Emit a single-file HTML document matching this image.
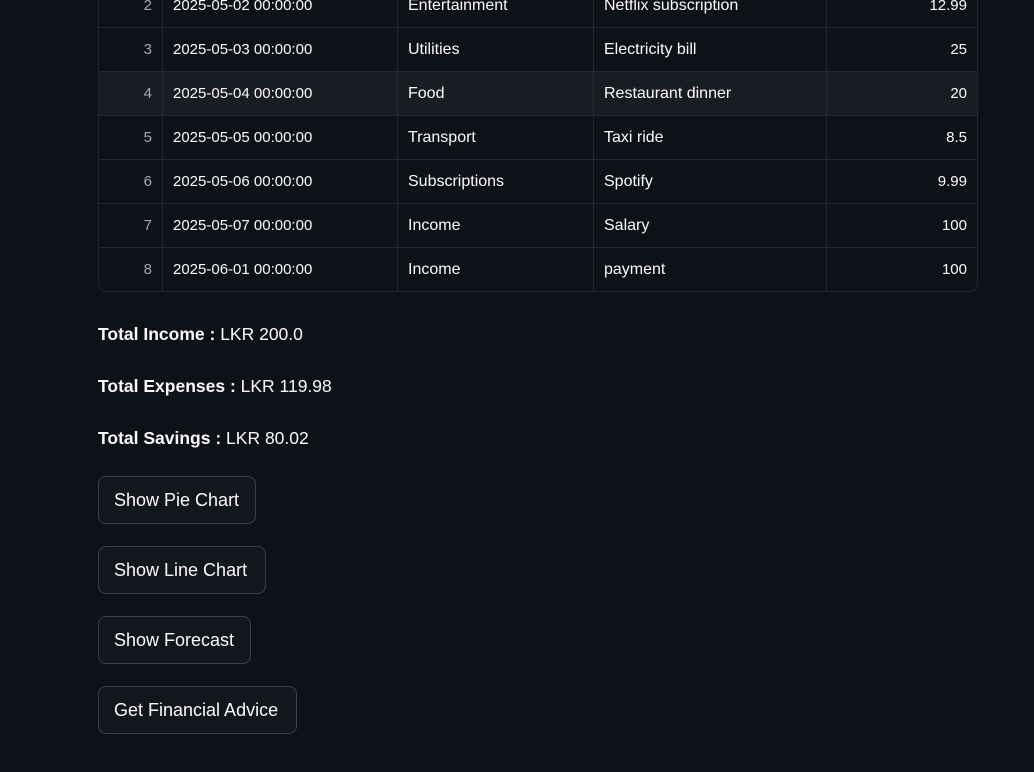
<!DOCTYPE html>
<html><head><meta charset="utf-8"><style>
body{margin:0;background:#0e1117;width:1034px;height:772px;overflow:hidden;font-family:"Liberation Sans",sans-serif;color:#fafafa;position:relative}
.tbl{position:absolute;left:98px;top:-16px;width:878px;border:1px solid #262730;border-top:none;border-radius:0 0 8px 8px;overflow:hidden}
.row{display:flex;height:43px;border-bottom:1px solid #262730;font-size:16px;align-items:center}
.row:last-child{border-bottom:none}
.row.h{background:#1a1c24}
.row div{height:100%;display:flex;align-items:center;border-right:1px solid #262730;box-sizing:border-box;padding:0 10px}
.row div:last-child{border-right:none}
.c0{width:64px;justify-content:flex-end;color:#a3a8b4;font-size:15px}
.c1{width:235px;font-size:15px}.c2{width:196px}.c3{width:233px}.c4{flex:1;justify-content:flex-end;font-size:15px}
.t{position:absolute;left:98px;font-size:17.5px}
.btn{position:absolute;left:98px;height:48px;border:1px solid #3d404a;border-radius:8px;background:#13161d;box-sizing:border-box;padding:0 15px;font-size:18px;display:flex;align-items:center}
</style></head><body>
<div class="tbl">
<div class="row"><div class="c0">2</div><div class="c1">2025-05-02 00:00:00</div><div class="c2">Entertainment</div><div class="c3">Netflix subscription</div><div class="c4">12.99</div></div>
<div class="row"><div class="c0">3</div><div class="c1">2025-05-03 00:00:00</div><div class="c2">Utilities</div><div class="c3">Electricity bill</div><div class="c4">25</div></div>
<div class="row h"><div class="c0">4</div><div class="c1">2025-05-04 00:00:00</div><div class="c2">Food</div><div class="c3">Restaurant dinner</div><div class="c4">20</div></div>
<div class="row"><div class="c0">5</div><div class="c1">2025-05-05 00:00:00</div><div class="c2">Transport</div><div class="c3">Taxi ride</div><div class="c4">8.5</div></div>
<div class="row"><div class="c0">6</div><div class="c1">2025-05-06 00:00:00</div><div class="c2">Subscriptions</div><div class="c3">Spotify</div><div class="c4">9.99</div></div>
<div class="row"><div class="c0">7</div><div class="c1">2025-05-07 00:00:00</div><div class="c2">Income</div><div class="c3">Salary</div><div class="c4">100</div></div>
<div class="row"><div class="c0">8</div><div class="c1">2025-06-01 00:00:00</div><div class="c2">Income</div><div class="c3">payment</div><div class="c4">100</div></div>
</div>
<div class="t" style="top:324px"><b>Total Income :</b> LKR 200.0</div>
<div class="t" style="top:376px"><b>Total Expenses :</b> LKR 119.98</div>
<div class="t" style="top:428px"><b>Total Savings :</b> LKR 80.02</div>
<div class="btn" style="top:476px;width:158px">Show Pie Chart</div>
<div class="btn" style="top:546px;width:168px">Show Line Chart</div>
<div class="btn" style="top:616px;width:153px">Show Forecast</div>
<div class="btn" style="top:686px;width:199px">Get Financial Advice</div>
</body></html>
